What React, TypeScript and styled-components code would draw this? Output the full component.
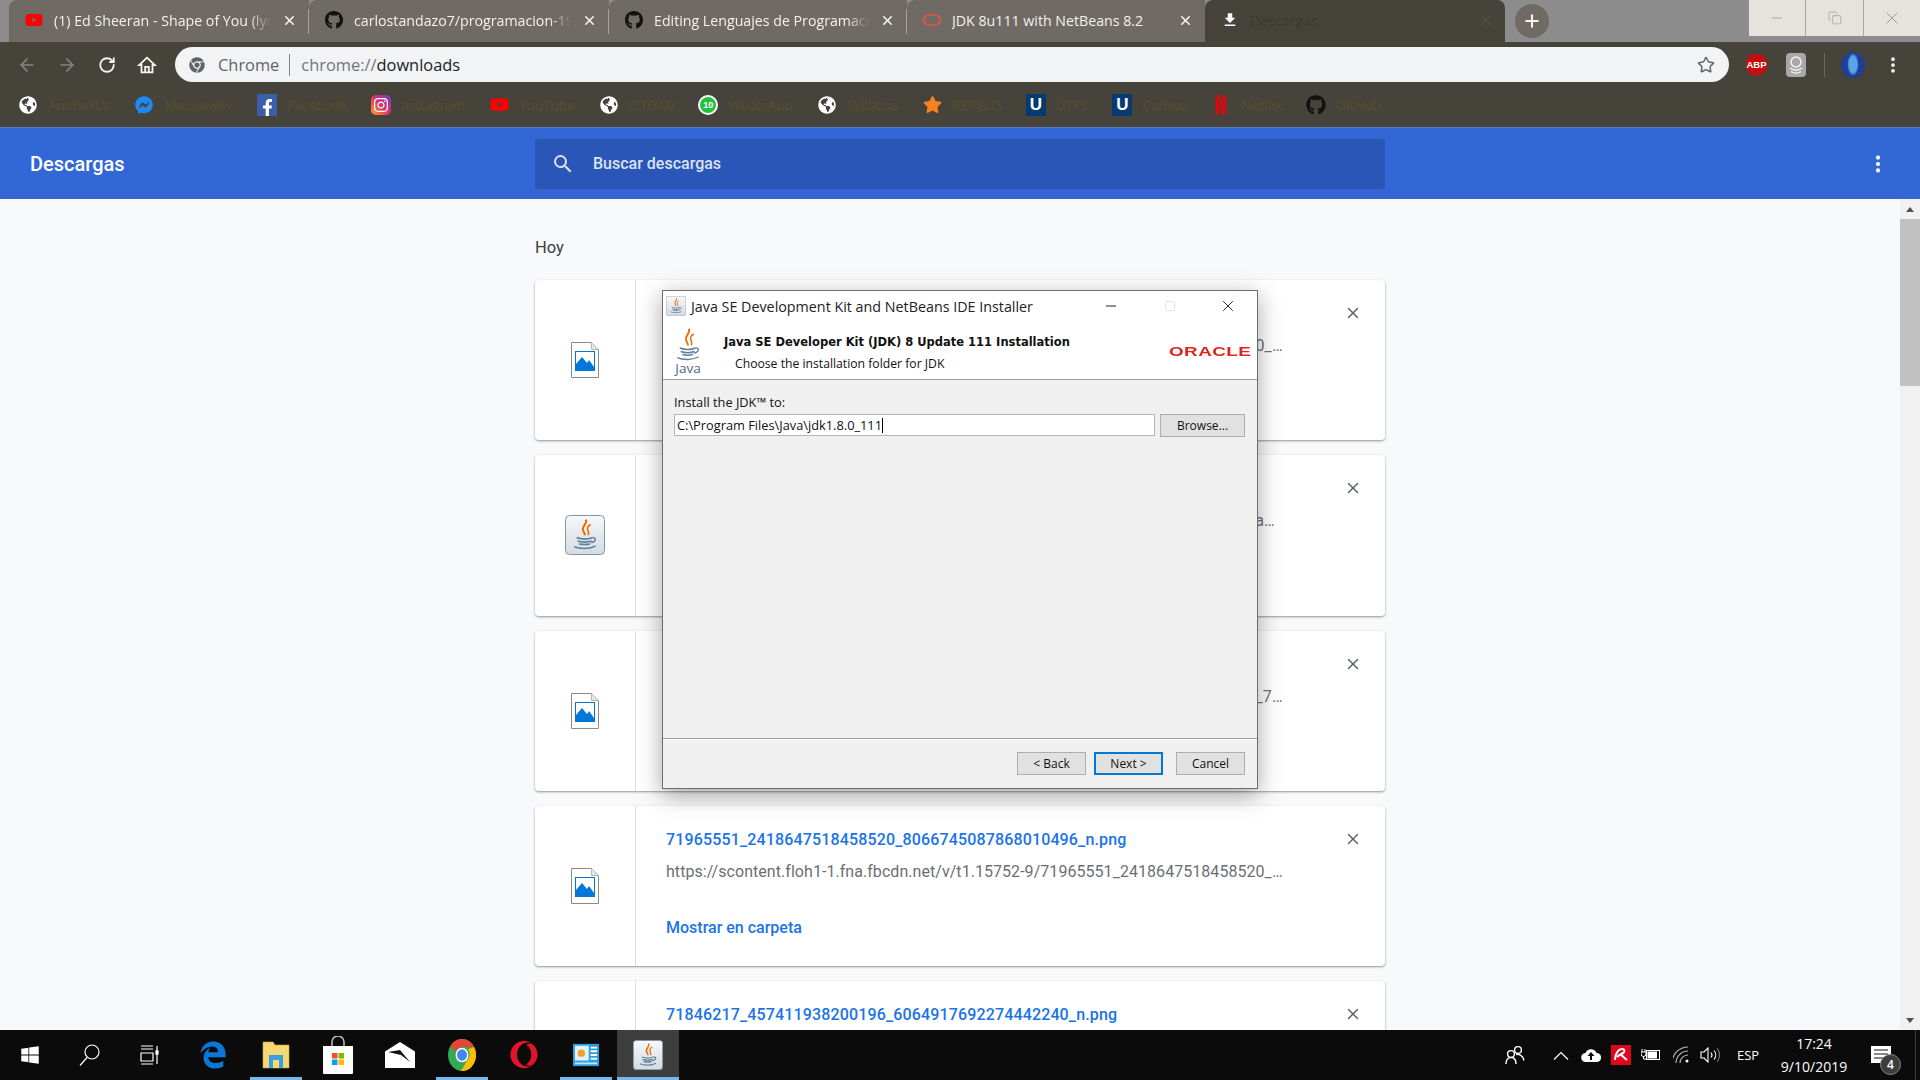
import React from "react";
import styled, { createGlobalStyle } from "styled-components";
import {
  ArrowLeft,
  ArrowRight,
  RotateCw,
  Star,
  MoreVertical,
  X,
  Minus,
  Plus,
  Square,
  Copy,
} from "lucide-react";
import {
  FaGithub,
  FaFacebookF,
  FaInstagram,
  FaYoutube,
  FaGlobeAmericas,
  FaFacebookMessenger,
  FaStar,
  FaWindows,
  FaEdgeLegacy,
  FaOpera,
  FaChrome,
} from "react-icons/fa";
import { SiNetflix } from "react-icons/si";

const GlobalStyle = createGlobalStyle`
  html, body { margin: 0; padding: 0; width: 1920px; height: 1080px; overflow: hidden; }
  * { box-sizing: border-box; }
  body { font-family: "Open Sans", "Liberation Sans", sans-serif; }
`;

const Page = styled.div`
  position: relative;
  width: 1920px;
  height: 1080px;
  display: flex;
  flex-direction: column;
  background: #f8f9fa;
  overflow: hidden;
`;

/* ---- tab strip ---- */
const TabStrip = styled.div`
  height: 42px;
  flex: none;
  background: #8c8c8c;
  display: flex;
  padding-left: 9px;
`;

const Tab = styled.div<{ $active?: boolean; $w: number }>`
  width: ${(p) => p.$w}px;
  height: 42px;
  flex: none;
  display: flex;
  align-items: center;
  gap: 11px;
  padding: 0 12px 2px 16px;
  background: ${(p) => (p.$active ? "#46433b" : "#6f6a64")};
  border-radius: ${(p) => (p.$active ? "8px 8px 0 0" : "8px 0 0 0")};
  color: ${(p) => (p.$active ? "#3c392f" : "#f2f1ee")};
  font-size: 14.2px;
  position: relative;
`;

const TabDivider = styled.span`
  position: absolute;
  right: 0;
  top: 9px;
  height: 25px;
  width: 1px;
  background: #a5a29d;
`;

const TabTitle = styled.span<{ $fade?: boolean }>`
  flex: 1;
  min-width: 0;
  white-space: nowrap;
  overflow: hidden;
  ${(p) => p.$fade && "mask-image: linear-gradient(to right, #000 90%, transparent 100%);"}
`;

const TabIcon = styled.span`
  width: 18px;
  height: 18px;
  flex: none;
  display: flex;
  align-items: center;
  justify-content: center;
`;

const NewTab = styled.div`
  width: 34px;
  height: 34px;
  margin: 4px 0 0 10px;
  border-radius: 50%;
  background: #6f6a64;
  color: #f4f4f2;
  display: flex;
  align-items: center;
  justify-content: center;
`;

const WindowControls = styled.div`
  margin-left: auto;
  height: 36px;
  display: flex;
  background: #e4e3dc;
  color: #8d8c87;
`;

const WindowBtn = styled.div<{ $w: number; $line?: boolean }>`
  width: ${(p) => p.$w}px;
  display: flex;
  align-items: center;
  justify-content: center;
  ${(p) => p.$line && "border-left: 1px solid #a9a8a2;"}
`;

/* ---- toolbar ---- */
const Toolbar = styled.div`
  height: 40px;
  flex: none;
  background: #46433b;
  display: flex;
  align-items: flex-end;
  padding-left: 7px;
`;

const NavBtn = styled.div<{ $dim?: boolean }>`
  width: 40px;
  height: 35px;
  display: flex;
  align-items: center;
  justify-content: center;
  color: ${(p) => (p.$dim ? "#86847e" : "#f5f5f3")};
`;

const Omnibox = styled.div`
  width: 1554px;
  height: 35px;
  margin-left: 8px;
  border-radius: 18px;
  background: #f1f3f4;
  display: flex;
  align-items: center;
  padding: 0 14px;
  font-size: 16.4px;
`;

const OriginChip = styled.span`
  color: #5f6368;
  margin-left: 13px;
  padding-right: 10px;
  border-right: 1px solid #80868b;
  line-height: 22px;
`;

const UrlScheme = styled.span`
  color: #70757a;
  margin-left: 11px;
`;

const UrlPath = styled.span`
  color: #202124;
`;

const StarBtn = styled.span`
  margin-left: auto;
  color: #5f6368;
  display: flex;
`;

const ExtRow = styled.div`
  display: flex;
  align-items: center;
  height: 35px;
  flex: 1;
  padding-left: 17px;
`;

const AbpBadge = styled.span`
  width: 21px;
  height: 22px;
  background: #c70d0d;
  clip-path: polygon(30% 0, 70% 0, 100% 30%, 100% 70%, 70% 100%, 30% 100%, 0 70%, 0 30%);
  color: #fff;
  font: bold 9.5px "Liberation Sans", sans-serif;
  display: flex;
  align-items: center;
  justify-content: center;
`;

const ExtBox = styled.span`
  width: 20px;
  height: 24px;
  margin-left: 19px;
  border-radius: 4px;
  background: #a8a8a8;
  display: flex;
  align-items: center;
  justify-content: center;
`;

const ExtSep = styled.span`
  width: 1px;
  height: 24px;
  background: #6a675f;
  margin-left: 18px;
`;

const Avatar = styled.span`
  width: 24px;
  height: 26px;
  margin-left: 16px;
  border-radius: 50%;
  background: radial-gradient(ellipse 24% 44% at 50% 48%, #5aa5e6 0 70%, #1f3f96 100%), #0c1c3a;
`;

const MenuDots = styled.span`
  margin-left: 18px;
  color: #f5f5f3;
  display: flex;
`;

/* ---- bookmarks ---- */
const BookmarkBar = styled.div`
  height: 46px;
  flex: none;
  background: #46433b;
  border-bottom: 1px solid #5d7fb5;
  display: flex;
  align-items: center;
  padding-left: 18px;
  gap: 24px;
`;

const Bookmark = styled.div`
  display: flex;
  align-items: center;
  gap: 10px;
  color: #574e2c;
  font-size: 13.5px;
`;

const BmIcon = styled.span<{ $bg?: string; $fg?: string }>`
  width: 20px;
  height: 20px;
  flex: none;
  display: flex;
  align-items: center;
  justify-content: center;
  color: ${(p) => p.$fg || "#fff"};
  ${(p) => p.$bg && `background: ${p.$bg};`}
`;

const FacebookBox = styled(BmIcon)`
  background: #3b5ea8;
  align-items: flex-end;
  height: 22px;
`;

const UtplBox = styled(BmIcon)`
  background: #083a72;
  height: 22px;
  font: bold 17px "Liberation Sans", sans-serif;
`;

const InstaBox = styled(BmIcon)`
  border-radius: 5px;
  background: linear-gradient(45deg, #f9a825, #e1306c 50%, #6a3fc8);
`;

const WhatsBadge = styled(BmIcon)`
  background: #25c03f;
  border-radius: 50%;
  font: bold 9px "Liberation Sans", sans-serif;
  border: 2px solid #fff;
`;

/* ---- downloads page ---- */
const Header = styled.div`
  height: 71px;
  flex: none;
  background: #3367d6;
  display: flex;
  align-items: center;
  padding: 0 30px;
  color: #fff;
  font-family: Roboto, sans-serif;
`;

const HeaderTitle = styled.div`
  width: 505px;
  font-size: 20px;
  font-weight: 500;
`;

const SearchBox = styled.div`
  width: 850px;
  height: 50px;
  border-radius: 2px;
  background: #2a56b8;
  display: flex;
  align-items: center;
  padding-left: 16px;
  gap: 18px;
  color: #dbe3f6;
  font-size: 16px;
  font-weight: 500;
`;

const HeaderMenu = styled.div`
  margin-left: auto;
  margin-right: 1px;
  display: flex;
`;

const Body = styled.div`
  flex: 1;
  min-height: 0;
  display: flex;
  overflow: hidden;
  font-family: Roboto, sans-serif;
`;

const Content = styled.div`
  flex: 1;
  padding: 39px 0 0 535px;
`;

const SectionTitle = styled.div`
  height: 42px;
  font-size: 16.5px;
  color: #3c4043;
  line-height: 20px;
`;

const CardList = styled.div`
  width: 850px;
  display: flex;
  flex-direction: column;
  gap: 15px;
`;

const Card = styled.div`
  height: 160.25px;
  flex: none;
  background: #fff;
  border-radius: 4px;
  box-shadow: 0 1px 2px rgba(60, 64, 67, 0.4), 0 1px 3px rgba(60, 64, 67, 0.18);
  display: flex;
`;

const IconCell = styled.div`
  width: 101px;
  flex: none;
  border-right: 1px solid #dadce0;
  display: flex;
  align-items: center;
  justify-content: center;
`;

const CardMain = styled.div`
  flex: 1;
  min-width: 0;
  padding: 24px 0 0 30px;
  display: flex;
  flex-direction: column;
`;

const FileName = styled.div`
  font-size: 16px;
  font-weight: 500;
  line-height: 20px;
  color: #1a73e8;
  letter-spacing: 0.15px;
  white-space: nowrap;
`;

const FileUrl = styled.div`
  width: 622px;
  margin-top: 12px;
  font-size: 16px;
  letter-spacing: 0.05px;
  line-height: 20px;
  color: #6b6f74;
  white-space: nowrap;
  overflow: hidden;
  text-overflow: ellipsis;
`;

const CardAction = styled.div`
  margin-top: 36px;
  font-size: 16px;
  font-weight: 500;
  line-height: 20px;
  color: #1a73e8;
`;

const CloseCell = styled.div`
  width: 64px;
  flex: none;
  padding: 24px 0 0 23px;
  color: #5f6368;
`;

const ScrollBar = styled.div`
  width: 20px;
  flex: none;
  background: #f1f1f1;
  display: flex;
  flex-direction: column;
  align-items: center;
`;

const ScrollThumb = styled.div`
  width: 100%;
  height: 167px;
  background: #c1c1c1;
`;

const ScrollArrow = styled.span<{ $down?: boolean }>`
  width: 0;
  height: 0;
  border-left: 4px solid transparent;
  border-right: 4px solid transparent;
  ${(p) => (p.$down ? "border-top: 5px solid #505050; margin-top: auto; margin-bottom: 7px;" : "border-bottom: 5px solid #505050; margin: 8px 0 7px;")}
`;

/* ---- installer window ---- */
const Dialog = styled.div`
  position: absolute;
  left: 662px;
  top: 290px;
  width: 596px;
  height: 499px;
  background: #f0f0f0;
  border: 1px solid #6d6d6d;
  box-shadow: 0 6px 22px rgba(0, 0, 0, 0.35);
  display: flex;
  flex-direction: column;
  font-family: "Open Sans", "Liberation Sans", sans-serif;
  color: #111;
`;

const DlgTitleBar = styled.div`
  height: 30px;
  flex: none;
  background: #fff;
  display: flex;
  align-items: center;
  padding-left: 3px;
  font-size: 14.3px;
  color: #222;
`;

const DlgTitle = styled.span`
  flex: 1;
  padding-left: 5px;
`;

const DlgCtl = styled.span<{ $dim?: boolean; $w?: number }>`
  width: ${(p) => p.$w ?? 58}px;
  display: flex;
  justify-content: center;
  color: ${(p) => (p.$dim ? "#c8c8c8" : "#111")};
`;

const DlgBanner = styled.div`
  height: 59px;
  flex: none;
  background: #fff;
  border-bottom: 1px solid #a0a0a0;
  display: flex;
  align-items: center;
`;

const JavaLogo = styled.div`
  width: 50px;
  margin-right: 11px;
  flex: none;
  display: flex;
  flex-direction: column;
  align-items: center;
  font-size: 13.5px;
  line-height: 12px;
  color: #4d6a85;
`;

const BannerText = styled.div`
  flex: 1;
  padding-top: 5px;
`;

const BannerTitle = styled.div`
  font: bold 11.5px/16px "DejaVu Sans", sans-serif;
`;

const BannerSub = styled.div`
  margin: 6px 0 0 11px;
  font-size: 12.2px;
  line-height: 16px;
`;

const OracleMark = styled.div`
  width: 86px;
  flex: none;
  font: bold 13px "Liberation Sans", sans-serif;
  letter-spacing: 0.3px;
  color: #e2231a;
  transform: scaleX(1.45);
  transform-origin: left center;
  margin-top: 2px;
  margin-right: 2px;
`;

const DlgBody = styled.div`
  flex: 1;
  min-height: 0;
  padding: 14px 11px 0 11px;
  font-size: 12.8px;
`;

const FieldLabel = styled.div`
  line-height: 16px;
  margin-bottom: 4px;
`;

const FieldRow = styled.div`
  display: flex;
  gap: 5px;
`;

const PathInput = styled.div`
  width: 481px;
  height: 22px;
  background: #fff;
  border: 1px solid #b5b5b5;
  display: flex;
  align-items: center;
  padding-left: 2px;
  white-space: nowrap;
`;

const Caret = styled.span`
  width: 1px;
  height: 15px;
  background: #000;
`;

const DlgButton = styled.div<{ $w?: number; $default?: boolean }>`
  width: ${(p) => p.$w ?? 69}px;
  height: 23px;
  background: #e1e1e1;
  border: ${(p) => (p.$default ? "2px solid #0078d7" : "1px solid #adadad")};
  display: flex;
  align-items: center;
  justify-content: center;
  font-size: 12px;
`;

const DlgFooter = styled.div`
  height: 50px;
  flex: none;
  border-top: 1px solid #a0a0a0;
  box-shadow: inset 0 1px 0 #fff;
  display: flex;
  align-items: flex-start;
  justify-content: flex-end;
  padding: 13px 12px 0 0;
`;

const NextSlot = styled.div`
  margin: 0 13px 0 8px;
`;

/* ---- taskbar ---- */
const Taskbar = styled.div`
  height: 50px;
  flex: none;
  background: #0b0b0b;
  display: flex;
  align-items: stretch;
  color: #fff;
  font-family: "Open Sans", sans-serif;
`;

const TaskCell = styled.div<{ $open?: boolean; $active?: boolean; $w?: number }>`
  width: ${(p) => p.$w ?? 62}px;
  flex: none;
  display: flex;
  align-items: center;
  justify-content: center;
  position: relative;
  background: ${(p) => (p.$active ? "#3e3e3e" : "transparent")};
  ${(p) =>
    p.$open &&
    `&::after { content: ""; position: absolute; left: ${p.$active ? 0 : 5}px; right: ${p.$active ? 0 : 5}px; bottom: 0; height: 3px; background: #76b9ed; }`}
`;

const Tray = styled.div`
  margin-left: auto;
  display: flex;
  align-items: center;
  border-right: 1px solid #3c3c3c;
  margin-right: 4px;
  padding-right: 5px;
`;

const TrayIcon = styled.div<{ $w: number }>`
  width: ${(p) => p.$w}px;
  display: flex;
  justify-content: center;
  align-items: center;
`;

const TrayLang = styled.div`
  width: 40px;
  font-size: 13px;
  text-align: center;
  margin: 0 8px 0 6px;
`;

const Clock = styled.div`
  width: 76px;
  text-align: center;
  font-size: 14px;
  line-height: 23px;
  white-space: nowrap;
`;

const NotifyWrap = styled.div`
  width: 58px;
  height: 50px;
  position: relative;
  display: flex;
  align-items: center;
  justify-content: center;
`;

const NotifyBadge = styled.span`
  position: absolute;
  left: 28px;
  top: 24px;
  width: 21px;
  height: 21px;
  border-radius: 50%;
  background: #3d3d3d;
  border: 1px solid #888;
  font-size: 12px;
  font-weight: 600;
  display: flex;
  align-items: center;
  justify-content: center;
`;

/* ---- drawn icons ---- */
const CupStrokes = ({ scale = 1 }: { scale?: number }) => (
  <>
    <path d="M18 2c3 5-6 8-3 14 1 2 2 3 2 5" stroke="#e76f00" strokeWidth={2.2 * scale} />
    <path d="M24 8c-4 2-5 5-3 8 1 2 1 3 0 5" stroke="#e76f00" strokeWidth={1.8 * scale} />
    <path d="M7 24c6 2 14 2 19 0M8 28c5 1.6 12 1.6 17 0M10 31.5c4 1 9 1 13 0" stroke="#5f7f9c" strokeWidth={1.8 * scale} />
    <path d="M26 24c5-1 5 5-2 6M4 35c7 3 19 3 26-1" stroke="#5f7f9c" strokeWidth={1.6 * scale} />
  </>
);

const JavaCup = () => (
  <svg width="28" height="35" viewBox="0 0 34 40" fill="none" preserveAspectRatio="none">
    <CupStrokes />
  </svg>
);

const JavaTile = ({ size }: { size: number }) => (
  <svg width={size} height={size} viewBox="0 0 40 40" fill="none">
    <defs>
      <linearGradient id={`jt${size}`} x1="0" y1="0" x2="0" y2="1">
        <stop offset="0" stopColor="#f7f8fa" />
        <stop offset="1" stopColor="#d4dbe2" />
      </linearGradient>
    </defs>
    <rect x="0.5" y="0.5" width="39" height="39" rx="4" fill={`url(#jt${size})`} stroke="#7e96aa" />
    <g transform="translate(6 3) scale(0.82)">
      <CupStrokes scale={1.15} />
    </g>
  </svg>
);

const ImageFile = () => (
  <svg width="28" height="36" viewBox="0 0 28 36">
    <path d="M.5.5h20l7 7v28H.5z" fill="#fff" stroke="#8a8a8a" />
    <path d="M20.5.5v7h7" fill="#e6e6e6" stroke="#b5b5b5" />
    <rect x="4.5" y="9.5" width="19" height="19" fill="#fff" stroke="#0078d7" />
    <path d="M5 28V22l6-7 5 6 2-3 5 7v3z" fill="#0078d7" />
  </svg>
);

const OracleTabIcon = () => (
  <svg width="20" height="14" viewBox="0 0 20 14" fill="none">
    <rect x="1" y="1.5" width="18" height="11" rx="5.5" stroke="#f0533a" strokeWidth="1.8" />
  </svg>
);

const DownloadGlyph = () => (
  <svg width="20" height="20" viewBox="0 0 24 24" fill="#fff">
    <path d="M19 9h-4V3H9v6H5l7 7 7-7zM5 18v2h14v-2H5z" />
  </svg>
);

const HomeGlyph = () => (
  <svg width="22" height="22" viewBox="0 0 24 24" fill="none" stroke="#f5f5f3" strokeWidth="2">
    <path d="M12 4L3.500 12H6v8h12v-8h2.500z" />
    <path d="M10 20v-6h4v6" />
  </svg>
);

const SearchGlyph = () => (
  <svg width="24" height="24" viewBox="0 0 24 24" fill="#dbe3f6">
    <path d="M15.5 14h-.79l-.28-.27A6.471 6.471 0 0 0 16 9.500 6.500 6.500 0 1 0 9.500 16c1.610 0 3.090-.59 4.230-1.570l.27.28v.79l5 4.990L20.490 19l-4.990-5zm-6 0C7.010 14 5 11.990 5 9.500S7.010 5 9.500 5 14 7.010 14 9.500 11.990 14 9.500 14z" />
  </svg>
);

const FolderIcon = () => (
  <svg width="28" height="30" viewBox="0 0 28 30">
    <path d="M1 2h10l2 3h14v23H1z" fill="#f7d774" stroke="#c9a94a" strokeWidth=".6" />
    <rect x="7" y="15" width="14" height="13" fill="#3aa0e6" />
    <rect x="11" y="20" width="6" height="8" fill="#f7d774" />
  </svg>
);

const StoreIcon = () => (
  <svg width="30" height="38" viewBox="0 0 30 38" fill="none">
    <path d="M9 10V6a6 6 0 0 1 12 0v4" stroke="#b9b9b9" strokeWidth="1.600" />
    <path d="M0 10h30v27a1 1 0 0 1-1 1H1a1 1 0 0 1-1-1z" fill="#fff" />
    <rect x="9" y="17" width="5.500" height="5.500" fill="#f25022" />
    <rect x="15.500" y="17" width="5.500" height="5.500" fill="#7fba00" />
    <rect x="9" y="23.500" width="5.500" height="5.500" fill="#00a4ef" />
    <rect x="15.500" y="23.500" width="5.500" height="5.500" fill="#ffb900" />
  </svg>
);

const MailIcon = () => (
  <svg width="30" height="26" viewBox="0 0 30 26">
    <path d="M15 0l15 9.500V26H0V9.500z" fill="#fff" />
    <path d="M3 10l12-2 10 12-9-7z" fill="#111" />
  </svg>
);

const ChromeIcon = () => (
  <svg width="28" height="32" viewBox="0 0 28 28" preserveAspectRatio="none">
    <circle cx="14" cy="14" r="14" fill="#34a853" />
    <path d="M14 0a14 14 0 0 1 12.100 7H14a7 7 0 0 0-6.400 4.100L2.600 5.600A14 14 0 0 1 14 0z" fill="#ea4335" />
    <path d="M26.100 7A14 14 0 0 1 13 28l6.200-9.400A7 7 0 0 0 20 9z" fill="#fbbc05" />
    <circle cx="14" cy="14" r="6.400" fill="#fff" />
    <circle cx="14" cy="14" r="5" fill="#4285f4" />
  </svg>
);

const ControlIcon = () => (
  <svg width="26" height="24" viewBox="0 0 28 24">
    <rect width="28" height="24" fill="#2d9cdb" />
    <rect x="2" y="2" width="15" height="16" fill="#dff1fb" />
    <circle cx="9" cy="10" r="4" fill="#f0a030" />
    <path d="M19 4h7M19 8h7M19 12h7M19 16h7" stroke="#fff" strokeWidth="2" />
    <rect x="2" y="20" width="24" height="2" fill="#bfe3f7" />
  </svg>
);

const TaskSearchIcon = () => (
  <svg width="22" height="24" viewBox="0 0 22 24" fill="none" stroke="#fff" strokeWidth="1.200">
    <circle cx="13" cy="9" r="7" />
    <path d="M8 14.500L1 22.500" />
  </svg>
);

const TaskViewIcon = () => (
  <svg width="20" height="20" viewBox="0 0 20 20" fill="none" stroke="#fff" strokeWidth="1.200">
    <path d="M1 1h12M1 4h12M1 8h12v8H1zM1 19h12M17 1v5M17 9v10" />
    <rect x="16" y="6" width="2" height="3" fill="#fff" />
  </svg>
);

const PeopleIcon = () => (
  <svg width="20" height="20" viewBox="0 0 20 20" fill="none" stroke="#fff" strokeWidth="1.400">
    <circle cx="13" cy="5" r="3.400" />
    <circle cx="6" cy="9" r="3.400" />
    <path d="M1 19c0-4 2-6.500 5-6.500s5 2.500 5 6.500M11 9.500c3-.5 7 1 8 6" />
  </svg>
);

const CaretIcon = () => (
  <svg width="16" height="9" viewBox="0 0 16 9" fill="none" stroke="#fff" strokeWidth="1.200">
    <path d="M1 8.500l7-7 7 7" />
  </svg>
);

const CloudIcon = () => (
  <svg width="20" height="14" viewBox="0 0 20 14">
    <path d="M5 14a4.500 4.500 0 0 1-.6-9A6 6 0 0 1 15.600 5a4.500 4.500 0 0 1 0 9z" fill="#fff" />
    <path d="M10 4l-3.500 4H9v4h2V8h2.500z" fill="#0b0b0b" />
  </svg>
);

const AviraIcon = () => (
  <svg width="20" height="20" viewBox="0 0 20 20" fill="none">
    <rect width="20" height="20" fill="#e2051b" />
    <path d="M4 15C4 8 8 4 11 4c3 0 3 3 1 4-2 1-4 2-6 4M10 10c2 1 3 3 6 5" stroke="#fff" strokeWidth="2" />
  </svg>
);

const BatteryIcon = () => (
  <svg width="20" height="14" viewBox="0 0 20 14" fill="none" stroke="#fff">
    <path d="M1 1v3M4 1v3M0 4h5v2a2.500 2.500 0 0 1-5 0zM2.500 8v3H5" />
    <rect x="5.500" y="2.500" width="13" height="9" />
    <rect x="7" y="4" width="8.500" height="6" fill="#fff" />
  </svg>
);

const WifiIcon = () => (
  <svg width="18" height="18" viewBox="0 0 18 18" fill="none" stroke="#bbb" strokeWidth="1.100">
    <path d="M1 17A16 16 0 0 1 17 1M5 17A12 12 0 0 1 17 5M9 17a8 8 0 0 1 8-8" transform="translate(-2 0)" />
    <circle cx="14" cy="15" r="1.500" fill="#fff" stroke="none" />
  </svg>
);

const SoundIcon = () => (
  <svg width="20" height="16" viewBox="0 0 20 16" fill="none" stroke="#fff" strokeWidth="1.100">
    <path d="M1 5h3l4-4v14l-4-4H1z" />
    <path d="M11 5.500a4 4 0 0 1 0 5M14 3.500a7 7 0 0 1 0 9" />
    <path d="M17 1a11 11 0 0 1 0 14" stroke="#777" />
  </svg>
);

const NotifyIcon = () => (
  <svg width="20" height="18" viewBox="0 0 20 18">
    <path d="M0 0h20v17H0z" fill="#fff" />
    <path d="M3 4h14M3 8h14M3 12h14" stroke="#111" strokeWidth="1.200" />
  </svg>
);

const ExtFace = () => (
  <svg width="16" height="18" viewBox="0 0 16 18" fill="none" stroke="#f4f4f4" strokeWidth="1.500">
    <circle cx="8" cy="6" r="5" />
    <path d="M2 12c4 3 8 3 12 0M3 15.500c3 2 7 2 10 0" />
  </svg>
);

/* ---- data ---- */
const bookmarks: { label: string; icon: React.ReactNode }[] = [
  { label: "AnimeFLV", icon: <BmIcon><FaGlobeAmericas size={18} /></BmIcon> },
  { label: "Messenger", icon: <BmIcon $fg="#1e88f5"><FaFacebookMessenger size={18} /></BmIcon> },
  { label: "Facebook", icon: <FacebookBox><FaFacebookF size={17} /></FacebookBox> },
  { label: "Instagram", icon: <InstaBox><FaInstagram size={16} /></InstaBox> },
  { label: "YouTube", icon: <BmIcon $fg="#f00"><FaYoutube size={19} /></BmIcon> },
  { label: "ISTDAB", icon: <BmIcon><FaGlobeAmericas size={18} /></BmIcon> },
  { label: "WhatsApp", icon: <WhatsBadge>10</WhatsBadge> },
  { label: "Syllabus", icon: <BmIcon><FaGlobeAmericas size={18} /></BmIcon> },
  { label: "REPELIS", icon: <BmIcon $fg="#f58220"><FaStar size={19} /></BmIcon> },
  { label: "UTPL", icon: <UtplBox>U</UtplBox> },
  { label: "Canvas", icon: <UtplBox>U</UtplBox> },
  { label: "Netflix", icon: <BmIcon $fg="#d00b14"><SiNetflix size={20} /></BmIcon> },
  { label: "GitHub", icon: <BmIcon $fg="#111"><FaGithub size={20} /></BmIcon> },
];

const downloads = [
  { name: "71971012_2418647518458520_8066745087868010420_n.png", url: "https://scontent.floh1-1.fna.fbcdn.net/v/t1.15752-9/71971012_2418647518458520_8066745087868010420_n.png", java: false },
  { name: "jdk-8u111-nb-8_2-windows-x64.exe", url: "https://download.oracle.com/otn-pub/java/jdk-nb/8u111-8.2/jdk-8u111-nbAuthParam=1570and8_2-windows-x64.exe", java: true },
  { name: "71846217_457411938200196_6064917692274442247_n.png", url: "https://scontent.floh1-1.fna.fbcdn.net/v/t1.15752-9/71846217_457411938200196_7_1692274442247_n.png", java: false },
  { name: "71965551_2418647518458520_8066745087868010496_n.png", url: "https://scontent.floh1-1.fna.fbcdn.net/v/t1.15752-9/71965551_2418647518458520_8066745087868010496_n.png", java: false },
  { name: "71846217_457411938200196_6064917692274442240_n.png", url: "https://scontent.floh1-1.fna.fbcdn.net/v/t1.15752-9/71846217_457411938200196_6064917692274442240_n.png", java: false },
];

const tabs = [
  { title: "(1) Ed Sheeran - Shape of You (lyrics)", icon: <FaYoutube size={18} color="#f00" />, w: 300 },
  { title: "carlostandazo7/programacion-19", icon: <FaGithub size={20} color="#111" />, w: 300 },
  { title: "Editing Lenguajes de Programación", icon: <FaGithub size={20} color="#111" />, w: 298 },
  { title: "JDK 8u111 with NetBeans 8.2", icon: <OracleTabIcon />, w: 298 },
];

export default function App() {
  return (
    <Page>
      <GlobalStyle />
      <TabStrip>
        {tabs.map((t, i) => (
          <Tab key={t.title} $w={t.w}>
            <TabIcon>{t.icon}</TabIcon>
            <TabTitle $fade={i < 3}>{t.title}</TabTitle>
            <X size={15} color="#f4f4f2" strokeWidth={2.5} />
            {i < 3 && <TabDivider />}
          </Tab>
        ))}
        <Tab $active $w={300}>
          <TabIcon><DownloadGlyph /></TabIcon>
          <TabTitle>Descargas</TabTitle>
          <X size={15} color="#55503a" strokeWidth={2.5} />
        </Tab>
        <NewTab><Plus size={20} strokeWidth={2.5} /></NewTab>
        <WindowControls>
          <WindowBtn $w={56}><Minus size={16} strokeWidth={1} /></WindowBtn>
          <WindowBtn $w={58} $line><Copy size={14} strokeWidth={1} /></WindowBtn>
          <WindowBtn $w={57} $line><X size={20} strokeWidth={1} /></WindowBtn>
        </WindowControls>
      </TabStrip>

      <Toolbar>
        <NavBtn $dim><ArrowLeft size={20} /></NavBtn>
        <NavBtn $dim><ArrowRight size={20} /></NavBtn>
        <NavBtn><RotateCw size={18} strokeWidth={2.4} /></NavBtn>
        <NavBtn><HomeGlyph /></NavBtn>
        <Omnibox>
          <FaChrome size={16} color="#5f6368" />
          <OriginChip>Chrome</OriginChip>
          <UrlScheme>chrome://</UrlScheme>
          <UrlPath>downloads</UrlPath>
          <StarBtn><Star size={18} strokeWidth={2} /></StarBtn>
        </Omnibox>
        <ExtRow>
          <AbpBadge>ABP</AbpBadge>
          <ExtBox><ExtFace /></ExtBox>
          <ExtSep />
          <Avatar />
          <MenuDots><MoreVertical size={20} strokeWidth={2.5} /></MenuDots>
        </ExtRow>
      </Toolbar>

      <BookmarkBar>
        {bookmarks.map((b) => (
          <Bookmark key={b.label}>
            {b.icon}
            <span>{b.label}</span>
          </Bookmark>
        ))}
      </BookmarkBar>

      <Header>
        <HeaderTitle>Descargas</HeaderTitle>
        <SearchBox>
          <SearchGlyph />
          <span>Buscar descargas</span>
        </SearchBox>
        <HeaderMenu><MoreVertical size={22} strokeWidth={2.6} /></HeaderMenu>
      </Header>

      <Body>
        <Content>
          <SectionTitle>Hoy</SectionTitle>
          <CardList>
            {downloads.map((d) => (
              <Card key={d.name}>
                <IconCell>{d.java ? <JavaTile size={40} /> : <ImageFile />}</IconCell>
                <CardMain>
                  <FileName>{d.name}</FileName>
                  <FileUrl>{d.url}</FileUrl>
                  <CardAction>Mostrar en carpeta</CardAction>
                </CardMain>
                <CloseCell><X size={18} strokeWidth={2} /></CloseCell>
              </Card>
            ))}
          </CardList>
        </Content>
        <ScrollBar>
          <ScrollArrow />
          <ScrollThumb />
          <ScrollArrow $down />
        </ScrollBar>
      </Body>

      <Taskbar>
        <TaskCell $w={60}><FaWindows size={20} /></TaskCell>
        <TaskCell $w={60}><TaskSearchIcon /></TaskCell>
        <TaskCell $w={60}><TaskViewIcon /></TaskCell>
        <TaskCell $w={65}><FaEdgeLegacy size={28} color="#0a78d7" /></TaskCell>
        <TaskCell $open><FolderIcon /></TaskCell>
        <TaskCell><StoreIcon /></TaskCell>
        <TaskCell><MailIcon /></TaskCell>
        <TaskCell $open><ChromeIcon /></TaskCell>
        <TaskCell><FaOpera size={28} color="#e3142a" /></TaskCell>
        <TaskCell $open><ControlIcon /></TaskCell>
        <TaskCell $open $active><JavaTile size={30} /></TaskCell>
        <Tray>
          <TrayIcon $w={40}><PeopleIcon /></TrayIcon>
          <TrayIcon $w={11} />
          <TrayIcon $w={30}><CaretIcon /></TrayIcon>
          <TrayIcon $w={30}><CloudIcon /></TrayIcon>
          <TrayIcon $w={30}><AviraIcon /></TrayIcon>
          <TrayIcon $w={30}><BatteryIcon /></TrayIcon>
          <TrayIcon $w={32}><WifiIcon /></TrayIcon>
          <TrayIcon $w={24}><SoundIcon /></TrayIcon>
          <TrayLang>ESP</TrayLang>
          <Clock>17:24<br />9/10/2019</Clock>
          <NotifyWrap>
            <NotifyIcon />
            <NotifyBadge>4</NotifyBadge>
          </NotifyWrap>
        </Tray>
      </Taskbar>

      <Dialog>
        <DlgTitleBar>
          <JavaTile size={20} />
          <DlgTitle>Java SE Development Kit and NetBeans IDE Installer</DlgTitle>
          <DlgCtl $w={60}><Minus size={16} strokeWidth={1.4} /></DlgCtl>
          <DlgCtl $dim><Square size={12} strokeWidth={1} /></DlgCtl>
          <DlgCtl><X size={18} strokeWidth={1.2} /></DlgCtl>
        </DlgTitleBar>
        <DlgBanner>
          <JavaLogo>
            <JavaCup />
            <span>Java</span>
          </JavaLogo>
          <BannerText>
            <BannerTitle>Java SE Developer Kit (JDK) 8 Update 111 Installation</BannerTitle>
            <BannerSub>Choose the installation folder for JDK</BannerSub>
          </BannerText>
          <OracleMark>ORACLE</OracleMark>
        </DlgBanner>
        <DlgBody>
          <FieldLabel>Install the JDK™ to:</FieldLabel>
          <FieldRow>
            <PathInput>C:\Program Files\Java\jdk1.8.0_111<Caret /></PathInput>
            <DlgButton $w={85}>Browse...</DlgButton>
          </FieldRow>
        </DlgBody>
        <DlgFooter>
          <DlgButton>&lt; Back</DlgButton>
          <NextSlot><DlgButton $default>Next &gt;</DlgButton></NextSlot>
          <DlgButton>Cancel</DlgButton>
        </DlgFooter>
      </Dialog>
    </Page>
  );
}
